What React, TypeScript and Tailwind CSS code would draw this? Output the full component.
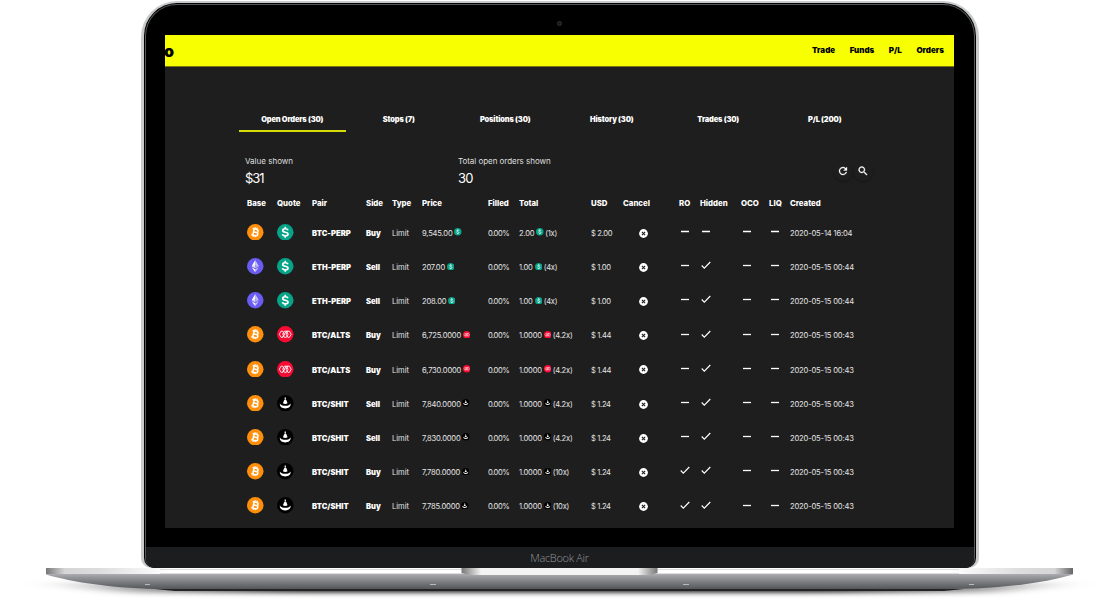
import React from "react";

type Coin = "btc" | "eth" | "usd" | "alts" | "shit";

type Order = {
  base: Coin;
  quote: Coin;
  pair: string;
  side: string;
  price: string;
  total: string;
  multiplier: string;
  usd: string;
  ro?: boolean;
  hidden?: boolean;
  created: string;
};

const orders: Order[] = [
  { base: "btc", quote: "usd", pair: "BTC-PERP", side: "Buy", price: "9,545.00", total: "2.00", multiplier: "(1x)", usd: "$ 2.00", created: "2020-05-14 16:04" },
  { base: "eth", quote: "usd", pair: "ETH-PERP", side: "Sell", price: "207.00", total: "1.00", multiplier: "(4x)", usd: "$ 1.00", hidden: true, created: "2020-05-15 00:44" },
  { base: "eth", quote: "usd", pair: "ETH-PERP", side: "Sell", price: "208.00", total: "1.00", multiplier: "(4x)", usd: "$ 1.00", hidden: true, created: "2020-05-15 00:44" },
  { base: "btc", quote: "alts", pair: "BTC/ALTS", side: "Buy", price: "6,725.0000", total: "1.0000", multiplier: "(4.2x)", usd: "$ 1.44", hidden: true, created: "2020-05-15 00:43" },
  { base: "btc", quote: "alts", pair: "BTC/ALTS", side: "Buy", price: "6,730.0000", total: "1.0000", multiplier: "(4.2x)", usd: "$ 1.44", hidden: true, created: "2020-05-15 00:43" },
  { base: "btc", quote: "shit", pair: "BTC/SHIT", side: "Sell", price: "7,840.0000", total: "1.0000", multiplier: "(4.2x)", usd: "$ 1.24", hidden: true, created: "2020-05-15 00:43" },
  { base: "btc", quote: "shit", pair: "BTC/SHIT", side: "Sell", price: "7,830.0000", total: "1.0000", multiplier: "(4.2x)", usd: "$ 1.24", hidden: true, created: "2020-05-15 00:43" },
  { base: "btc", quote: "shit", pair: "BTC/SHIT", side: "Buy", price: "7,780.0000", total: "1.0000", multiplier: "(10x)", usd: "$ 1.24", ro: true, hidden: true, created: "2020-05-15 00:43" },
  { base: "btc", quote: "shit", pair: "BTC/SHIT", side: "Buy", price: "7,785.0000", total: "1.0000", multiplier: "(10x)", usd: "$ 1.24", ro: true, hidden: true, created: "2020-05-15 00:43" },
];

const headers = ["Base", "Quote", "Pair", "Side", "Type", "Price", "Filled", "Total", "USD", "Cancel", "RO", "Hidden", "OCO", "LIQ", "Created"];

const tabs = ["Open Orders (30)", "Stops (7)", "Positions (30)", "History (30)", "Trades (30)", "P/L (200)"];

const columns =
  "grid grid-cols-[30px_35px_54px_26px_30px_66px_31px_72px_32px_56px_21px_41px_28px_21px_90px] items-center whitespace-nowrap";

function CoinIcon({ coin, className }: { coin: Coin; className: string }) {
  return (
    <svg viewBox="0 0 32 32" className={className}>
      {coin === "btc" && (
        <>
          <circle cx="16" cy="16" r="16" fill="#ff8f0a" />
          <g transform="rotate(13 16 16)" fill="none" stroke="#fff" strokeWidth="3">
            <path d="M9.500 10h8.300a3 3 0 0 1 0 6H12.500M12.500 16h6a3.100 3.100 0 0 1 0 6.200H9.500M12.500 10v12.200" />
            <path d="M13.800 6.500v3.500M17.600 6.500v3.500M13.800 22v3.500M17.600 22v3.500" strokeWidth="2.200" />
          </g>
        </>
      )}
      {coin === "eth" && (
        <>
          <circle cx="16" cy="16" r="16" fill="#6a5bf2" />
          <path d="M16 4l-7 12 7 4z" fill="#fff" />
          <path d="M16 4l7 12-7 4z" fill="#c9c3f8" />
          <path d="M9 17.800l7 9.700v-5.600z" fill="#fff" />
          <path d="M23 17.800l-7 9.700v-5.600z" fill="#c9c3f8" />
          <path d="M9 16l7-3 7 3-7 4z" fill="#6a5bea" opacity=".25" />
        </>
      )}
      {coin === "usd" && (
        <>
          <circle cx="16" cy="16" r="16" fill="#06a388" />
          <path
            d="M21.300 12.200c-.6-2-2.400-3-5.200-3-3 0-5 1.200-5 3.200 0 5 10.300 2.200 10.300 7.200 0 2-2 3.400-5.300 3.400-3.100 0-5.100-1.200-5.600-3.500M16 5.500v4M16 22.500v4"
            fill="none"
            stroke="#fff"
            strokeWidth="3.200"
          />
        </>
      )}
      {coin === "alts" && (
        <>
          <circle cx="16" cy="16" r="16" fill="#f70b32" />
          <path
            d="M8 10l-3.500 6L8 22h3l7-12h3.500M11 22l3.200-6L11 10H8M14.500 10h3.500l3.500 6-3.500 6h-3.500L11 16zM21 10h3l3.500 6-3.500 6h-3l-3.300-6z"
            fill="none"
            stroke="#fff"
            strokeWidth="1.700"
            strokeLinejoin="round"
          />
        </>
      )}
      {coin === "shit" && (
        <>
          <circle cx="16" cy="16" r="16" fill="#000" />
          <path d="M14.800 5h2.400v4h-2.400z" fill="#fff" />
          <path d="M14 9.500h4l2.500 6.300q-4.500 3-9 0z" fill="#fff" />
          <path d="M5.500 16.500q2.500 4.500 10.500 4.500t10.500-4.500c.5 6.500-4.500 9.500-10.500 9.500s-11-3-10.500-9.500z" fill="#fff" />
        </>
      )}
    </svg>
  );
}

function Flag({ on }: { on?: boolean }) {
  return (
    <svg viewBox="0 0 12 12" className="-mt-[3px] size-3 fill-none stroke-white">
      {on ? <path d="M1.700 6.500L4.300 9.200l6-6.200" strokeWidth="1.150" /> : <path d="M2 6.500h8" strokeWidth="1.300" />}
    </svg>
  );
}

function CancelIcon() {
  return (
    <svg viewBox="0 0 10 10" className="mt-px ml-[15.5px] size-[9px]">
      <circle cx="5" cy="5" r="4.900" fill="#fff" />
      <path d="M3.200 3.200l3.600 3.600M6.800 3.200L3.200 6.800" stroke="#1e1e1e" strokeWidth="1.200" />
    </svg>
  );
}

function OrderRow({ order }: { order: Order }) {
  return (
    <div className={`${columns} h-[34.2px] text-[7.6px] tracking-[-0.17px] text-[#e4e4e4]`}>
      <CoinIcon coin={order.base} className="-mt-px size-[16.5px]" />
      <CoinIcon coin={order.quote} className="-mt-px size-[16.5px]" />
      <span className="pt-[2px] font-black tracking-[0.03px] text-white">{order.pair}</span>
      <span className="pt-[2px] font-black tracking-[-0.05px] text-white">{order.side}</span>
      <span className="pt-[2px] tracking-[-0.05px]">Limit</span>
      <span className="flex items-center gap-[1.5px] pt-[2px] tracking-[-0.2px]">
        {order.price}
        <CoinIcon coin={order.quote} className="-mt-[3px] size-[7.5px]" />
      </span>
      <span className="pt-[2px] tracking-[-0.5px]">0.00%</span>
      <span className="flex items-center pt-[2px] tracking-[-0.25px]">
        {order.total}
        <CoinIcon coin={order.quote} className="-mt-[3px] mr-[1.5px] ml-[2px] size-[7.5px]" />
        {order.multiplier}
      </span>
      <span className="pt-[2px] tracking-[-0.35px]">{order.usd}</span>
      <CancelIcon />
      <Flag on={order.ro} />
      <Flag on={order.hidden} />
      <Flag />
      <Flag />
      <span className="pt-[2px]">{order.created}</span>
    </div>
  );
}

function Screen() {
  return (
    <div className="h-[493px] w-[789px] overflow-hidden bg-[#1e1e1e] text-white">
      <header className="flex h-8 items-center justify-between border-b border-[#77790c] bg-[#f7ff00] pr-[10px] text-[8px] font-black text-black">
        <span className="-ml-[1px] text-[16px] leading-none">o</span>
        <nav className="flex gap-[14.5px] pb-[2px]">
          <a>Trade</a>
          <a>Funds</a>
          <a>P/L</a>
          <a>Orders</a>
        </nav>
      </header>

      <div className="ml-[74px] w-[639px]">
        <div className="mt-10 grid grid-cols-6 text-center text-[7.4px] font-black tracking-[-0.12px]">
          {tabs.map((tab, i) => (
            <div key={tab} className="h-[24.5px]">
              <div className="h-[23px] leading-[25px]">{tab}</div>
              {i === 0 && <div className="h-[1.5px] bg-[#d5dc06]" />}
            </div>
          ))}
        </div>

        <div className="mt-[22px] flex h-9 pl-[6px]">
          <div className="w-[213px]">
            <div className="text-[8px] leading-[14px] text-[#dedede]">Value shown</div>
            <div className="text-[13px] leading-5 tracking-[-1px]">$31</div>
          </div>
          <div className="flex-1">
            <div className="text-[8px] leading-[14px] tracking-[-0.04px] text-[#dedede]">Total open orders shown</div>
            <div className="text-[13px] leading-5 tracking-[-0.7px]">30</div>
          </div>
          <div className="mt-[7px] mr-[5px] flex">
            <div className="flex size-5 items-center justify-center rounded-full shadow-xs shadow-black/30">
              <svg viewBox="0 0 24 24" className="size-3 fill-white stroke-white stroke-[.6]">
                <path d="M17.650 6.350A8 8 0 1 0 19.730 14h-2.080A6 6 0 1 1 12 6c1.660 0 3.140.69 4.220 1.780L13 11h7V4z" />
              </svg>
            </div>
            <div className="flex size-5 items-center justify-center rounded-full shadow-xs shadow-black/30">
              <svg viewBox="0 0 24 24" className="size-3 fill-white stroke-white stroke-[.6]">
                <path d="M15.500 14h-.79l-.28-.27A6.500 6.500 0 1 0 13.730 14.430l.27.28v.79l5 4.990L20.490 19zM9.500 14A4.500 4.500 0 1 1 9.500 5a4.500 4.500 0 0 1 0 9z" />
              </svg>
            </div>
          </div>
        </div>

        <div className="pt-px pl-2">
          <div className={`${columns} h-[25px] pt-[2px] text-[7.8px] font-extrabold`}>
            {headers.map((header) => (
              <span key={header}>{header}</span>
            ))}
          </div>
          {orders.map((order, i) => (
            <OrderRow key={i} order={order} />
          ))}
        </div>
      </div>
    </div>
  );
}

function LaptopBase() {
  return (
    <svg viewBox="0 0 1119 32" className="h-8 w-[1119px]">
      <defs>
        <linearGradient id="deck">
          <stop offset="0" stopColor="#777" />
          <stop offset=".018" stopColor="#d5d5d5" />
          <stop offset=".05" stopColor="#dcdcdc" />
          <stop offset=".12" stopColor="#fff" />
          <stop offset=".88" stopColor="#fff" />
          <stop offset=".95" stopColor="#dcdcdc" />
          <stop offset=".982" stopColor="#d5d5d5" />
          <stop offset="1" stopColor="#666" />
        </linearGradient>
        <linearGradient id="body" x2="0" y2="1">
          <stop offset="0" stopColor="#b3b4b7" />
          <stop offset=".3" stopColor="#939498" />
          <stop offset="1" stopColor="#55565a" />
        </linearGradient>
        <linearGradient id="notch">
          <stop offset="0" stopColor="#777" />
          <stop offset=".1" stopColor="#f3f3f3" />
          <stop offset=".9" stopColor="#f3f3f3" />
          <stop offset="1" stopColor="#777" />
        </linearGradient>
        <linearGradient id="floor">
          <stop offset="0" stopColor="#000" stopOpacity="0" />
          <stop offset=".25" stopColor="#000" stopOpacity=".9" />
          <stop offset=".75" stopColor="#000" stopOpacity=".9" />
          <stop offset="1" stopColor="#000" stopOpacity="0" />
        </linearGradient>
        <filter id="soft" x="-5%" y="-150%" width="110%" height="400%">
          <feGaussianBlur stdDeviation="16 2.500" />
        </filter>
      </defs>
      <path d="M30 15h1059l-100 9.500H130z" fill="url(#floor)" filter="url(#soft)" />
      <path d="M46 5h1027v1.500C1048 14 1003 21 953 21H166C116 21 71 14 46 6.500z" fill="url(#body)" />
      <path d="M155 21h809l-20 2H175z" fill="#242424" />
      <path d="M46 0h1027v6H46z" fill="url(#deck)" />
      <path d="M160 1.500h799M160 5.500h799" stroke="#dedede" strokeWidth="1" />
      <path d="M461.500 0h196v5q-5 2-12 2h-172q-7 0-12-2z" fill="url(#notch)" />
      <path d="M145 16.500h5M430 16.500h6M683 16.500h6M969 16.500h5" stroke="#b9babb" />
    </svg>
  );
}

function App() {
  return (
    <div className="flex h-[600px] w-[1119px] flex-col items-center overflow-hidden bg-white font-['Inter',sans-serif]">
      <div className="mt-px h-[567px] w-[838px] rounded-t-[36px] rounded-b-[10px] bg-[#c8cacc] px-[3px] pt-[2px]">
        <div className="h-[565px] rounded-t-[33px] rounded-b-[10px] bg-black p-px">
          <div className="flex h-[564px] flex-col items-center overflow-hidden rounded-t-[32px] rounded-b-[10px] border border-b-0 border-[#55585a] bg-black">
            <div className="flex h-[30px] items-center pt-[7px]">
              <span className="size-[5px] rounded-full border border-[#303236] bg-[#111a22]" />
            </div>
            <Screen />
            <div className="mt-[19px] h-[21px] w-full bg-[#1b1d1f] text-center font-['Open_Sans',sans-serif] text-[11px] leading-[22px] font-light tracking-[-0.3px] text-[#96989a]">
              MacBook Air
            </div>
          </div>
        </div>
      </div>
      <LaptopBase />
    </div>
  );
}

export default App;
